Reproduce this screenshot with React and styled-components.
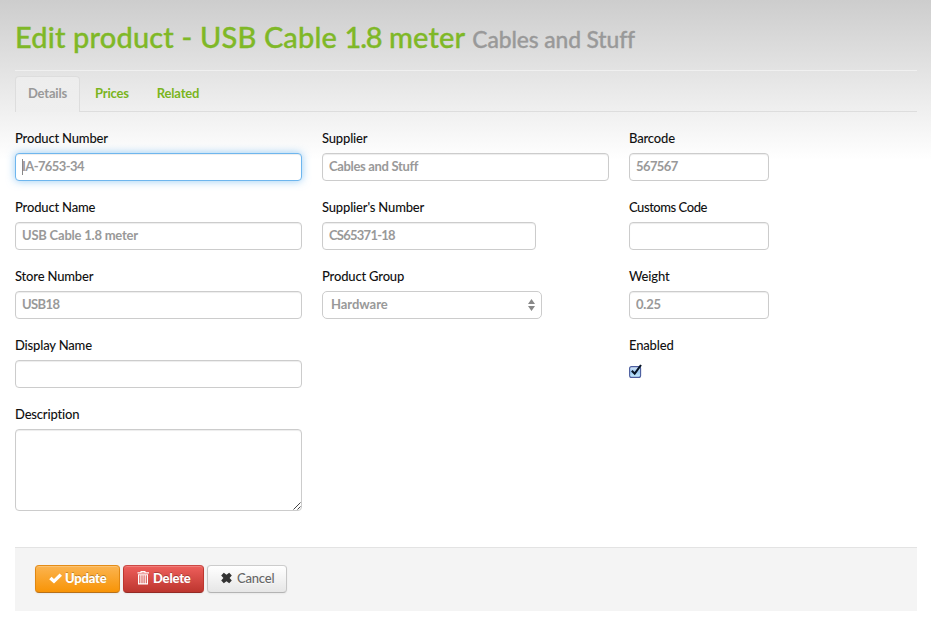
import React from 'react';
import styled, { createGlobalStyle, css } from 'styled-components';

const GlobalStyle = createGlobalStyle`
  *, *::before, *::after { box-sizing: border-box; }
  html { background: #fff; }
  body {
    margin: 0;
    background: linear-gradient(#cdcdcd, #fff 160px) no-repeat;
    min-height: 625px;
    color: #111;
    font: 500 13px/20px Lato, "Open Sans", sans-serif;
    overflow: hidden;
  }
`;

const Page = styled.main`
  display: flex;
  flex-direction: column;
  width: 902px;
  margin-left: 15px;
`;

const Header = styled.header`
  height: 71px;
  padding-top: 17px;
  border-bottom: 1px solid #f0f0f0;
`;

const Title = styled.h1`
  display: flex;
  align-items: baseline;
  margin: 0;
  color: #7fb827;
  font-size: 29px;
  font-weight: 500;
  line-height: 40px;
  letter-spacing: 0.16px;
  white-space: pre;
  -webkit-text-stroke: 0.35px currentColor;
`;

const Version = styled.span`
  letter-spacing: -1.2px;
`;

const Subtitle = styled.small`
  margin-left: 7px;
  color: #999;
  font-size: 22.8px;
  letter-spacing: -0.1px;
`;

const Tabs = styled.nav`
  display: flex;
  gap: 2px;
  height: 36px;
  margin-top: 5px;
  border-bottom: 1px solid #ddd;
`;

const Tab = styled.a`
  height: 36px;
  padding: 7px 12px;
  border: 1px solid transparent;
  border-radius: 4px 4px 0 0;
  color: #7ab51d;
  font-weight: 700;
  line-height: 18px;
  letter-spacing: -0.19px;
  ${({ $active }) => $active && css`
    border-color: #ddd;
    border-bottom: 0;
    background: linear-gradient(#ededed, #efefef);
    color: #999;
  `}
`;

const Form = styled.form`
  display: flex;
  flex-direction: column;
`;

const Columns = styled.div`
  display: grid;
  grid-template-columns: 287px 287px 140px;
  gap: 20px;
  align-items: start;
  height: 419px;
  margin-top: 16px;
`;

const Column = styled.div`
  display: flex;
  flex-direction: column;
  align-items: flex-start;
  gap: 16px;
`;

const FieldBox = styled.div`
  display: flex;
  flex-direction: column;
  position: relative;
  gap: 5px;
`;

const Label = styled.label`
  line-height: 20px;
  letter-spacing: ${({ $spacing }) => $spacing || '-0.17px'};
  white-space: nowrap;
`;

const controlStyle = css`
  width: ${({ $width }) => $width || 287}px;
  height: 28px;
  margin: 0;
  padding: 2px 6px 5px;
  border: 1px solid #ccc;
  border-radius: 4px;
  outline: 0;
  background: #fff;
  box-shadow: inset 0 1px 1px rgba(0, 0, 0, 0.075);
  color: #999;
  font: 700 13px/19px Lato, "Open Sans", sans-serif;
  letter-spacing: ${({ $spacing }) => $spacing || '-0.22px'};
`;

const Input = styled.input`
  ${controlStyle}
  ${({ $focused }) => $focused && css`
    border-color: #6eb6ee;
    box-shadow: inset 0 1px 1px rgba(0, 0, 0, 0.075), 0 0 8px rgba(82, 168, 236, 0.6);
  `}
`;

const Caret = styled.span`
  position: absolute;
  left: 7px;
  bottom: 6px;
  width: 1px;
  height: 16px;
  background: #888;
`;

const SelectBox = styled.div`
  ${controlStyle}
  display: flex;
  align-items: center;
  justify-content: space-between;
  padding: 2px 6px 4px 8px;
  border-radius: 5px;
  box-shadow: none;
`;

const Arrows = styled.svg`
  width: 7px;
  height: 14px;
  margin-top: 1px;
  fill: #888;
`;

const TextAreaFrame = styled.div`
  position: relative;
  display: flex;
`;

const TextArea = styled.textarea`
  ${controlStyle}
  height: 82px;
  resize: none;
`;

const Grip = styled.svg`
  position: absolute;
  right: 1px;
  bottom: 1px;
  width: 8px;
  height: 8px;
  stroke: #444;
`;

const Check = styled.svg`
  width: 14px;
  height: 15px;
  margin-top: 4px;
`;

const Actions = styled.footer`
  display: flex;
  gap: 3px;
  height: 64px;
  padding: 17px 20px;
  border-top: 1px solid #e3e3e3;
  background: #f4f4f4;
`;

const tones = {
  update: css`
    border-color: #e48c17 #e08712 #b87018;
    background: linear-gradient(#fbb450, #f89406);
  `,
  remove: css`
    border-color: #cc4844 #bd362f #942a25;
    background: linear-gradient(#ee5f5b, #bd362f);
  `,
  cancel: css`
    border-color: #ccc #c6c6c6 #b3b3b3;
    background: linear-gradient(#fff, #e6e6e6);
    color: #666;
    font-weight: 500;
    text-shadow: 0 1px 1px rgba(255, 255, 255, 0.75);
  `,
};

const Button = styled.button`
  display: flex;
  align-items: center;
  justify-content: flex-start;
  width: ${({ $width }) => $width}px;
  height: 28px;
  margin: 0;
  padding: 0 0 2px 13px;
  gap: ${({ $gap }) => $gap}px;
  border: 1px solid;
  border-radius: 4px;
  box-shadow: inset 0 1px 0 rgba(255, 255, 255, 0.2), 0 1px 2px rgba(0, 0, 0, 0.05);
  color: #fff;
  font: 900 13px/20px Lato, "Open Sans", sans-serif;
  letter-spacing: -0.2px;
  text-shadow: 0 -1px 0 rgba(0, 0, 0, 0.25);
  ${({ $tone }) => tones[$tone]}
`;

const ButtonIcon = styled.svg`
  flex: none;
  width: ${({ $w }) => $w}px;
  height: 14px;
  fill: currentColor;
`;

const CancelIcon = styled(ButtonIcon)`
  color: #333;
`;

function Field({ label, labelSpacing, focused, ...input }) {
  return (
    <FieldBox>
      <Label $spacing={labelSpacing}>{label}</Label>
      <Input readOnly $focused={focused} {...input} />
      {focused && <Caret />}
    </FieldBox>
  );
}

export default function App() {
  return (
    <>
      <GlobalStyle />
      <Page>
        <Header>
          <Title>
            <span>Edit product - USB Cable <Version>1.8</Version> meter</span>
            <Subtitle>Cables and Stuff</Subtitle>
          </Title>
        </Header>
        <Tabs>
          <Tab $active>Details</Tab>
          <Tab>Prices</Tab>
          <Tab>Related</Tab>
        </Tabs>
        <Form>
          <Columns>
            <Column>
              <Field label="Product Number" defaultValue="IA-7653-34" focused $spacing="-0.6px" />
              <Field label="Product Name" defaultValue="USB Cable 1.8 meter" />
              <Field label="Store Number" defaultValue="USB18" $spacing="-0.6px" />
              <Field label="Display Name" />
              <FieldBox>
                <Label>Description</Label>
                <TextAreaFrame>
                  <TextArea readOnly />
                  <Grip viewBox="0 0 8 8"><path d="M.5 7.5l7-7M4.5 7.5l3-3" /></Grip>
                </TextAreaFrame>
              </FieldBox>
            </Column>
            <Column>
              <Field label="Supplier" defaultValue="Cables and Stuff" $spacing="-0.33px" />
              <Field label="Supplier's Number" defaultValue="CS65371-18" $width={214} $spacing="-0.75px" />
              <FieldBox>
                <Label>Product Group</Label>
                <SelectBox $width={220} $spacing="-0.05px">
                  Hardware
                  <Arrows viewBox="0 0 7 14"><path d="M3.5 1L7 6H0zM3.5 13L7 8H0z" /></Arrows>
                </SelectBox>
              </FieldBox>
            </Column>
            <Column>
              <Field label="Barcode" defaultValue="567567" $width={140} $spacing="-0.6px" />
              <Field label="Customs Code" labelSpacing="-0.45px" $width={140} />
              <Field label="Weight" defaultValue="0.25" $width={140} $spacing="-0.2px" />
              <FieldBox>
                <Label>Enabled</Label>
                <Check viewBox="0 0 14 15">
                  <defs>
                    <linearGradient id="box" x1="0" y1="0" x2="0" y2="1">
                      <stop offset="0" stopColor="#dcebfa" />
                      <stop offset=".5" stopColor="#9cc9f3" />
                      <stop offset="1" stopColor="#c8f0ff" />
                    </linearGradient>
                  </defs>
                  <rect x=".6" y="2.6" width="11" height="10.8" rx="2" fill="url(#box)" stroke="#4b5c9e" strokeWidth="1.1" />
                  <path d="M2.8 6.8L5.7 9.7 12 1" fill="none" stroke="#071526" strokeWidth="2.1" />
                </Check>
              </FieldBox>
            </Column>
          </Columns>
          <Actions>
            <Button type="button" $tone="update" $width={85} $gap={3}>
              <ButtonIcon $w={13} viewBox="0 0 13 14"><path d="M.2 8.2L2.6 5.8 5 8 10.6 2.4 13 4.8 5 12.6z" /></ButtonIcon>
              Update
            </Button>
            <Button type="button" $tone="remove" $width={81} $gap={4}>
              <ButtonIcon $w={12} viewBox="0 0 12 14">
                <path fillRule="evenodd" d="M3.5 0h5v1.2H12v1.3H.5V1.2h3zM4.5.9v.5h3V.9zM1 3.3h10V13.5H1zM2.3 4.3v8h1v-8zM4.5 4.3v8h1v-8zM6.6 4.3v8h1v-8zM8.8 4.3v8h1v-8z" />
              </ButtonIcon>
              Delete
            </Button>
            <Button type="button" $tone="cancel" $width={80} $gap={5}>
              <CancelIcon $w={11} viewBox="0 0 11 14">
                <path d="M.2 4.4L2.8 1.8l2.7 2 2.7-2 2.6 2.6L8.6 7l2.2 2.6-2.6 2.6-2.7-2-2.7 2L.2 9.6 2.4 7z" />
              </CancelIcon>
              Cancel
            </Button>
          </Actions>
        </Form>
      </Page>
    </>
  );
}
